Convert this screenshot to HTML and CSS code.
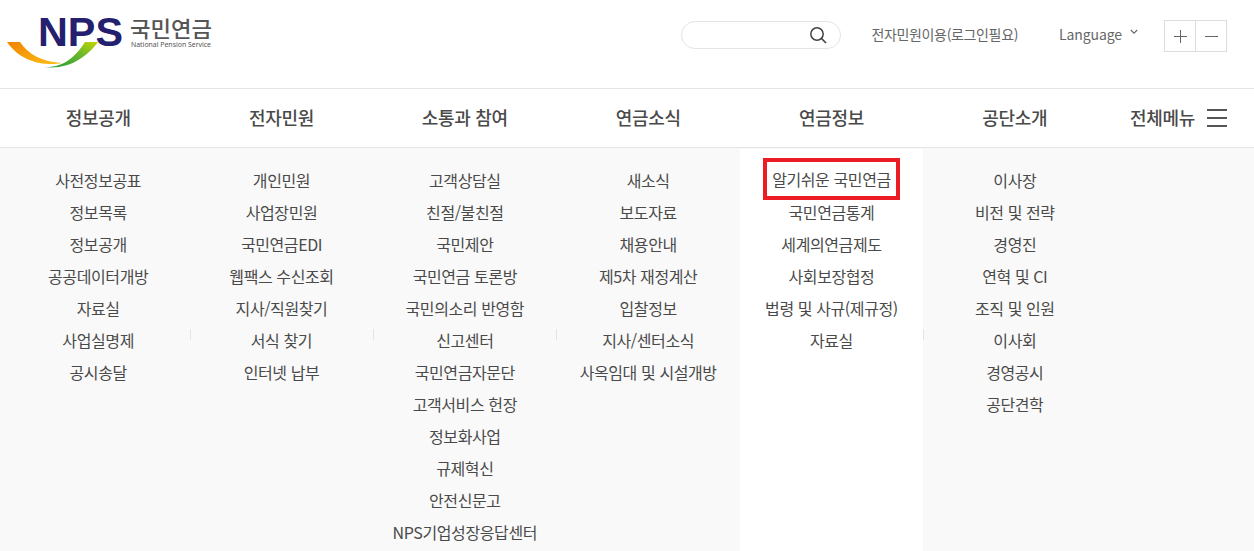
FILE: index.html
```html
<!DOCTYPE html>
<html lang="ko">
<head>
<meta charset="utf-8">
<title>국민연금공단</title>
<link rel="stylesheet" href="styles.css">
</head>
<body>
<header class="top">
  <a class="logo" href="#">
    <svg width="212" height="70" viewBox="0 0 212 70">
      <defs>
        <linearGradient id="g1" x1="0" y1="0" x2="1" y2="0.6"><stop offset="0" stop-color="#f08300"/><stop offset="1" stop-color="#fdb813"/></linearGradient>
        <linearGradient id="g2" x1="0" y1="1" x2="1" y2="0"><stop offset="0" stop-color="#1f9a3c"/><stop offset="0.6" stop-color="#6cb82c"/><stop offset="1" stop-color="#c4d600"/></linearGradient>
      </defs>
      <text class="logo-nps" x="38" y="46" textLength="85" lengthAdjust="spacingAndGlyphs">NPS</text>
      <path d="M7 42 L20 42 C28 54 42 62 62 63 C48 66 22 64 7 42Z" fill="url(#g1)"/>
      <path d="M44 67 C64 68 76 56 85 42 L98 42 C86 58 68 70 44 67Z" fill="url(#g2)"/>
      <text class="logo-ko" x="130" y="37" textLength="82" lengthAdjust="spacingAndGlyphs">국민연금</text>
      <text class="logo-en" x="131" y="47" textLength="80" lengthAdjust="spacingAndGlyphs">National Pension Service</text>
    </svg>
  </a>
  <div class="utils">
    <div class="search">
      <svg width="20" height="20" viewBox="0 0 20 20"><circle cx="9" cy="9" r="6.2" fill="none" stroke="#444" stroke-width="1.5"/><path d="M13.5 13.5 L18 18" stroke="#444" stroke-width="1.7"/></svg>
    </div>
    <a class="util-link login" href="#">전자민원이용(로그인필요)</a>
    <a class="util-link lang" href="#">Language
      <svg width="8" height="6" viewBox="0 0 8 6"><path d="M0.8 1 L4 4.2 L7.2 1" fill="none" stroke="#666" stroke-width="1.1"/></svg>
    </a>
    <div class="zoom">
      <span class="zoom-btn"><svg width="13" height="13" viewBox="0 0 13 13"><path d="M6.5 0V13M0 6.5H13" stroke="#666" stroke-width="1"/></svg></span>
      <span class="zoom-btn"><svg width="13" height="13" viewBox="0 0 13 13"><path d="M0 6.5H13" stroke="#666" stroke-width="1"/></svg></span>
    </div>
  </div>
</header>
<nav class="gnb">
  <div class="gnb-items">
    <a href="#">정보공개</a><a href="#">전자민원</a><a href="#">소통과 참여</a><a href="#">연금소식</a><a href="#">연금정보</a><a href="#">공단소개</a>
  </div>
  <a class="all-menu" href="#">전체메뉴<span class="burger"><i></i><i></i><i></i></span></a>
</nav>
<section class="sub">
  <ul class="col">
    <li>사전정보공표</li><li>정보목록</li><li>정보공개</li><li>공공데이터개방</li><li>자료실</li><li>사업실명제</li><li>공시송달</li>
  </ul>
  <ul class="col">
    <li>개인민원</li><li>사업장민원</li><li>국민연금EDI</li><li>웹팩스 수신조회</li><li>지사/직원찾기</li><li>서식 찾기</li><li>인터넷 납부</li>
  </ul>
  <ul class="col">
    <li>고객상담실</li><li>친절/불친절</li><li>국민제안</li><li>국민연금 토론방</li><li>국민의소리 반영함</li><li>신고센터</li><li>국민연금자문단</li><li>고객서비스 헌장</li><li>정보화사업</li><li>규제혁신</li><li>안전신문고</li><li>NPS기업성장응답센터</li>
  </ul>
  <ul class="col">
    <li>새소식</li><li>보도자료</li><li>채용안내</li><li>제5차 재정계산</li><li>입찰정보</li><li>지사/센터소식</li><li>사옥임대 및 시설개방</li>
  </ul>
  <ul class="col col-active">
    <li class="marked"><span class="mark">알기쉬운 국민연금</span></li><li>국민연금통계</li><li>세계의연금제도</li><li>사회보장협정</li><li>법령 및 사규(제규정)</li><li>자료실</li>
  </ul>
  <ul class="col col-last">
    <li>이사장</li><li>비전 및 전략</li><li>경영진</li><li>연혁 및 CI</li><li>조직 및 인원</li><li>이사회</li><li>경영공시</li><li>공단견학</li>
  </ul>
</section>
</body>
</html>
```
FILE: styles.css
```css
* { box-sizing: border-box; }
html, body { margin: 0; padding: 0; }
body {
  width: 1254px;
  height: 551px;
  overflow: hidden;
  background: #fff;
  font-family: "Noto Sans CJK KR", "Noto Sans", sans-serif;
  color: #444;
}
a { color: inherit; text-decoration: none; }
ul { list-style: none; margin: 0; padding: 0; }

.top {
  height: 89px;
  border-bottom: 1px solid #e4e4e4;
  display: flex;
  justify-content: space-between;
  align-items: flex-start;
  padding-right: 27px;
}
.logo { display: block; height: 70px; }
.logo svg { display: block; }
.logo-nps { font: 700 41px "Liberation Sans", sans-serif; fill: #24206f; }
.logo-ko { font: 500 22px "Noto Sans CJK KR", sans-serif; fill: #555; }
.logo-en { font: 400 7px "Noto Sans", sans-serif; fill: #555; }

.utils { display: flex; align-items: flex-start; padding-top: 20px; }
.search {
  width: 160px;
  height: 28px;
  margin-top: 1px;
  border: 1px solid #e4e4e4;
  border-radius: 14px;
  display: flex;
  align-items: center;
  justify-content: flex-end;
  padding-right: 12px;
}
.util-link { font-size: 14px; line-height: 28px; color: #666; }
.login { margin-left: 30px; letter-spacing: -0.35px; }
.lang { margin-left: 41px; display: flex; align-items: center; gap: 8px; letter-spacing: -0.1px; }
.lang svg { margin-top: -4px; }
.zoom { display: flex; margin-left: 26px; border: 1px solid #ddd; width: 63px; height: 32px; }
.zoom-btn { flex: 1; display: flex; align-items: center; justify-content: center; }
.zoom-btn + .zoom-btn { border-left: 1px solid #ddd; }

.gnb {
  height: 59px;
  border-bottom: 1px solid #e4e4e4;
  display: flex;
  padding-left: 6.5px;
  font-size: 18px;
  font-weight: 500;
  color: #4a4a4a;
}
.gnb-items { display: grid; grid-template-columns: repeat(6, 183.33px); width: 1100px; }
.gnb-items a { text-align: center; line-height: 56px; letter-spacing: -0.3px; }
.all-menu { display: flex; align-items: center; margin-left: 23.5px; height: 56px; letter-spacing: -0.3px; }
.burger { display: flex; flex-direction: column; gap: 6px; margin: 2px 0 0 12px; width: 20px; }
.burger i { display: block; height: 2px; background: #555; }

.sub {
  height: 403px;
  padding: 1px 0 0 6.5px;
  background: #f9f9f9;
  display: grid;
  grid-template-columns: repeat(6, 183.33px);
  align-items: stretch;
}
.col { padding-top: 15px; position: relative; text-align: center; font-size: 16px; letter-spacing: -0.4px; color: #4a4a4a; }
.col li { height: 32px; line-height: 32px; white-space: nowrap; }
.col:not(.col-last)::after {
  content: "";
  position: absolute;
  top: 180px;
  right: -1px;
  width: 1px;
  height: 11px;
  background: #e4e4e4;
}
.col-active { background: #fff; }
.mark {
  display: inline-block;
  height: 42px;
  line-height: 34px;
  padding: 0 5.5px;
  margin-top: -6px;
  vertical-align: top;
  border: 4px solid #ed1c24;
}
```
